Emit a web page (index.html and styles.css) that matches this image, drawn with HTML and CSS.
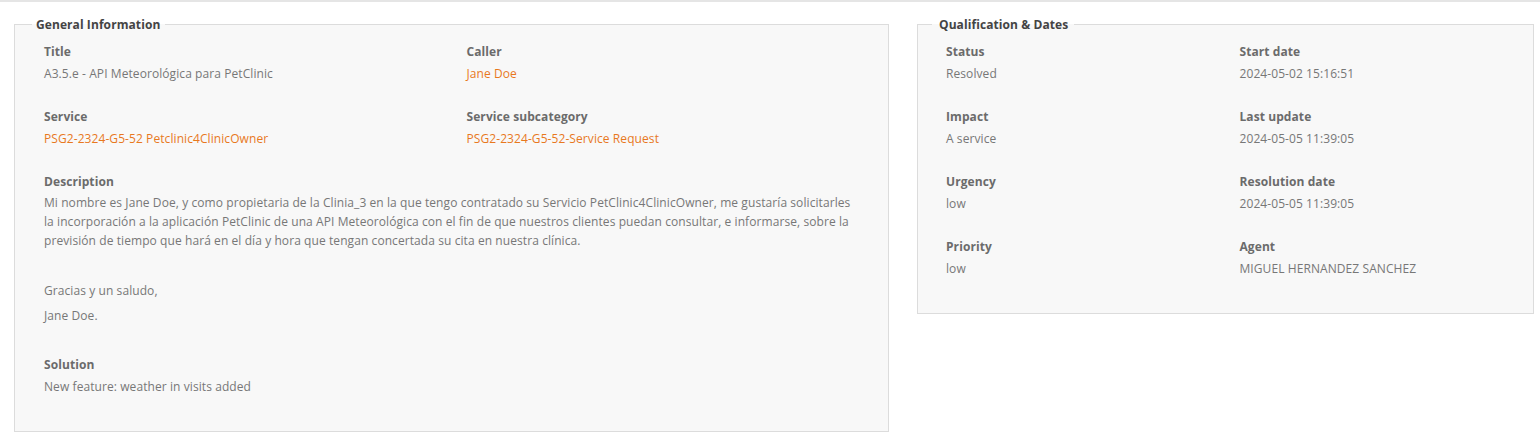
FILE: index.html
```html
<!DOCTYPE html>
<html lang="es">
<head>
<meta charset="utf-8">
<title>Ticket details</title>
<link rel="stylesheet" href="styles.css">
</head>
<body>
<div class="topbar"></div>
<main class="layout">
  <fieldset class="panel panel-general">
    <legend>General Information</legend>
    <div class="grid">
      <div class="field">
        <div class="label">Title</div>
        <div class="value">A3.5.e - API Meteorológica para PetClinic</div>
      </div>
      <div class="field">
        <div class="label">Caller</div>
        <div class="value link">Jane Doe</div>
      </div>
      <div class="field">
        <div class="label">Service</div>
        <div class="value link">PSG2-2324-G5-52 Petclinic4ClinicOwner</div>
      </div>
      <div class="field">
        <div class="label">Service subcategory</div>
        <div class="value link">PSG2-2324-G5-52-Service Request</div>
      </div>
      <div class="field wide">
        <div class="label">Description</div>
        <div class="value rich">
          <p>Mi nombre es Jane Doe, y como propietaria de la Clinia_3 en la que tengo contratado su Servicio PetClinic4ClinicOwner, me gustaría solicitarles la incorporación a la aplicación PetClinic de una API Meteorológica con el fin de que nuestros clientes puedan consultar, e informarse, sobre la previsión de tiempo que hará en el día y hora que tengan concertada su cita en nuestra clínica.</p>
          <p><br></p>
          <p>Gracias y un saludo,</p>
          <p>Jane Doe.</p>
        </div>
      </div>
      <div class="field wide">
        <div class="label">Solution</div>
        <div class="value">New feature: weather in visits added</div>
      </div>
    </div>
  </fieldset>

  <fieldset class="panel panel-dates">
    <legend>Qualification &amp; Dates</legend>
    <div class="grid">
      <div class="field">
        <div class="label">Status</div>
        <div class="value">Resolved</div>
      </div>
      <div class="field">
        <div class="label">Start date</div>
        <div class="value">2024-05-02 15:16:51</div>
      </div>
      <div class="field">
        <div class="label">Impact</div>
        <div class="value">A service</div>
      </div>
      <div class="field">
        <div class="label">Last update</div>
        <div class="value">2024-05-05 11:39:05</div>
      </div>
      <div class="field">
        <div class="label">Urgency</div>
        <div class="value">low</div>
      </div>
      <div class="field">
        <div class="label">Resolution date</div>
        <div class="value">2024-05-05 11:39:05</div>
      </div>
      <div class="field">
        <div class="label">Priority</div>
        <div class="value">low</div>
      </div>
      <div class="field">
        <div class="label">Agent</div>
        <div class="value">MIGUEL HERNANDEZ SANCHEZ</div>
      </div>
    </div>
  </fieldset>
</main>
</body>
</html>
```

FILE: styles.css
```css
* {
  box-sizing: border-box;
}

html, body {
  margin: 0;
  padding: 0;
  background: #ffffff;
}

body {
  font-family: "Open Sans", "Noto Sans", "Liberation Sans", sans-serif;
  font-size: 12px;
  letter-spacing: 0.08px;
  color: #777777;
}

.topbar {
  height: 2px;
  background: #e5e5e5;
}

.layout {
  display: flex;
  align-items: flex-start;
  gap: 28px;
  padding: 13px 0 0 14px;
}

.panel {
  margin: 0;
  border: 1px solid #dcdcdc;
  background: #f8f8f8;
  min-width: 0;
}

.panel legend {
  font-weight: 700;
  font-size: 12px;
  line-height: 18px;
  padding-top: 1px;
  color: #444444;
}

.panel-general {
  width: 875px;
  padding: 0 11px 20px 17px;
}

.panel-general legend {
  padding-left: 4px;
  padding-right: 5px;
}

.panel-general .field {
  padding-left: 12px;
}

.panel-dates {
  width: 617px;
  padding: 0 14px 20px 14px;
}

.panel-dates legend {
  padding-left: 7px;
  padding-right: 6px;
}

.panel-dates .field {
  padding-left: 14px;
}

.grid {
  display: grid;
  grid-template-columns: 1fr 1fr;
  margin-top: -1px;
}

.field {
  padding-top: 10px;
  padding-bottom: 15px;
  padding-right: 8px;
}

.field.wide {
  grid-column: 1 / -1;
  padding-right: 18px;
}

.label {
  font-weight: 700;
  line-height: 18px;
  color: #6b6b6b;
  margin-bottom: 3px;
}

.value {
  line-height: 19px;
  color: #777777;
}

.value.link {
  color: #e8781e;
}

.rich p {
  margin: 0 0 6px;
}

.rich p:first-child {
  margin-top: -1px;
}
```
